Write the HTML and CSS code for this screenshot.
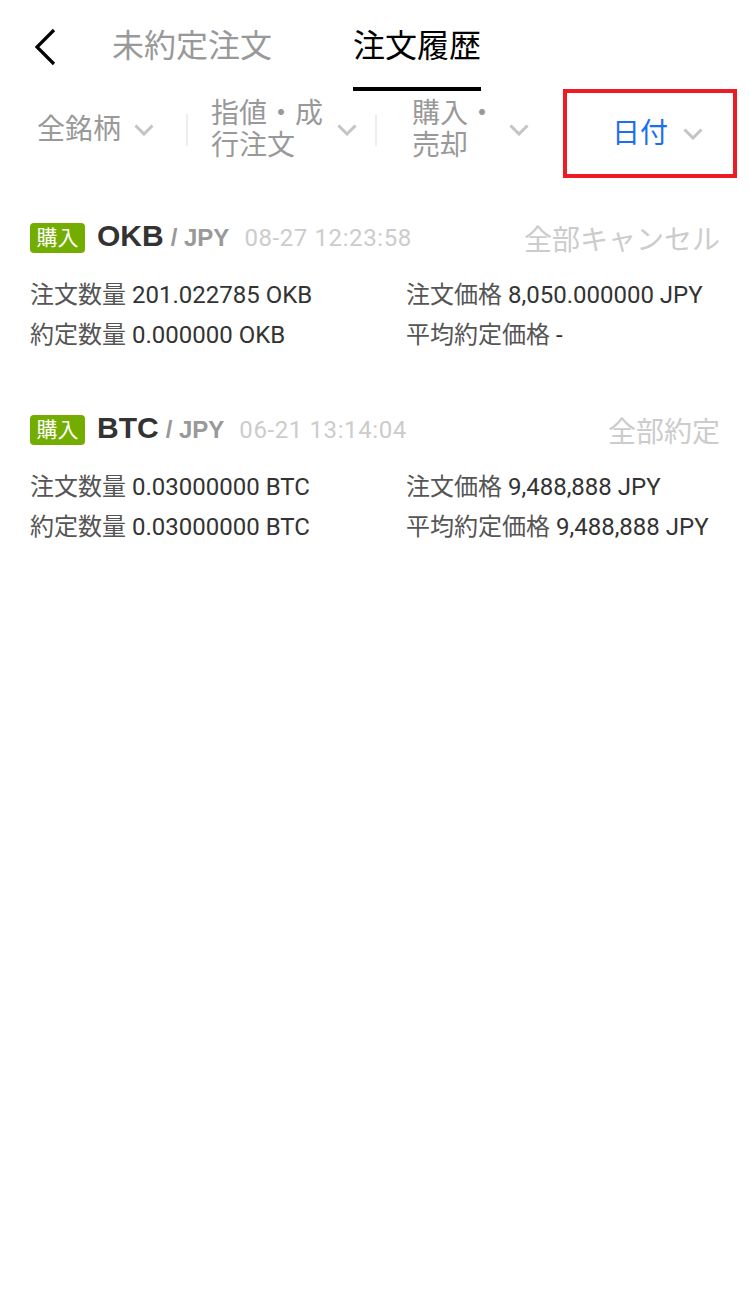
FILE: index.html
```
<!DOCTYPE html>
<html lang="ja">
<head>
    <meta charset="UTF-8">
    <meta name="viewport" content="width=device-width, initial-scale=1.0">
    <title>注文履歴</title>
    <link rel="stylesheet" href="styles.css">
</head>
<body>

    <!-- Tabs -->
    <header class="tabs">
        <a class="back" href="#">
            <svg width="30" height="40" viewBox="0 0 30 40"><path d="M24 3 L7 20 L24 37" fill="none" stroke="#000" stroke-width="3.2"/></svg>
        </a>
        <div class="tab">未約定注文</div>
        <div class="tab active">注文履歴</div>
    </header>

    <!-- Filters -->
    <nav class="filters">
        <div class="filter f1">
            <span class="label">全銘柄</span>
            <svg class="chev" width="20" height="12" viewBox="0 0 20 12"><path d="M1.5 1.5 L10 10 L18.5 1.5"/></svg>
        </div>
        <span class="sep s1"></span>
        <div class="filter f2">
            <span class="label">指値・成<br>行注文</span>
            <svg class="chev" width="20" height="12" viewBox="0 0 20 12"><path d="M1.5 1.5 L10 10 L18.5 1.5"/></svg>
        </div>
        <span class="sep s2"></span>
        <div class="filter f3">
            <span class="label">購入・<br>売却</span>
            <svg class="chev" width="20" height="12" viewBox="0 0 20 12"><path d="M1.5 1.5 L10 10 L18.5 1.5"/></svg>
        </div>
        <div class="filter f4 selected">
            <span class="label">日付</span>
            <svg class="chev" width="20" height="12" viewBox="0 0 20 12"><path d="M1.5 1.5 L10 10 L18.5 1.5"/></svg>
        </div>
    </nav>

    <!-- Orders -->
    <section class="orders">
        <article class="order">
            <div class="order-head">
                <span class="badge">購入</span>
                <span class="pair"><span class="symbol">OKB</span><span class="quote">/ JPY</span><span class="time">08-27 12:23:58</span></span>
                <span class="status">全部キャンセル</span>
            </div>
            <div class="order-body">
                <div class="field"><span class="key">注文数量</span> 201.022785 OKB</div>
                <div class="field"><span class="key">注文価格</span> 8,050.000000 JPY</div>
                <div class="field"><span class="key">約定数量</span> 0.000000 OKB</div>
                <div class="field"><span class="key">平均約定価格</span> -</div>
            </div>
        </article>

        <article class="order">
            <div class="order-head">
                <span class="badge">購入</span>
                <span class="pair"><span class="symbol">BTC</span><span class="quote">/ JPY</span><span class="time">06-21 13:14:04</span></span>
                <span class="status">全部約定</span>
            </div>
            <div class="order-body">
                <div class="field"><span class="key">注文数量</span> 0.03000000 BTC</div>
                <div class="field"><span class="key">注文価格</span> 9,488,888 JPY</div>
                <div class="field"><span class="key">約定数量</span> 0.03000000 BTC</div>
                <div class="field"><span class="key">平均約定価格</span> 9,488,888 JPY</div>
            </div>
        </article>
    </section>

</body>
</html>
```

FILE: styles.css
```
body {
    margin: 0;
    font-family: Roboto, "Noto Sans CJK JP", sans-serif;
    background: #fff;
    color: #333;
}

/* Tabs */
.tabs {
    display: flex;
    height: 91px;
    padding-left: 30px;
}

.back {
    display: block;
    width: 82px;
    padding-top: 27px;
}

.tab {
    box-sizing: border-box;
    height: 91px;
    padding-top: 24px;
    font-size: 32px;
    line-height: 44px;
    color: #999;
    border-bottom: 4px solid transparent;
}

.tab.active {
    margin-left: 81px;
    color: #000;
    border-bottom-color: #000;
}

/* Filters */
.filters {
    display: flex;
    align-items: center;
    height: 78px;
    padding-left: 37px;
}

.filter {
    display: flex;
    align-items: center;
    gap: 13px;
}

.filter .label {
    font-size: 28px;
    line-height: 32px;
    color: #999;
}

.chev path {
    fill: none;
    stroke: #c4c4c4;
    stroke-width: 3;
}

.sep {
    width: 2px;
    height: 32px;
    background: #eee;
}

.s1 { margin-left: 32px; }
.f2 { margin-left: 23px; gap: 14px; }
.s2 { margin-left: 18px; }
.f3 { margin-left: 35px; }

.f4 {
    box-sizing: border-box;
    width: 174px;
    height: 89px;
    margin-left: 34px;
    margin-top: 7px;
    padding-left: 45px;
    gap: 15px;
}

.filter.selected .label {
    color: #1a6ff0;
}

.f4.selected {
    border: 4px solid #ed1c24;
}

/* Orders */
.orders {
    padding: 54px 30px 0;
}

.order + .order {
    margin-top: 60px;
}

.order-head {
    display: flex;
    align-items: center;
    height: 30px;
}

.badge {
    box-sizing: border-box;
    width: 55px;
    height: 30px;
    border-radius: 4px;
    background: #72ad00;
    color: #fff;
    font-size: 21px;
    line-height: 30px;
    text-align: center;
}

.pair {
    margin-left: 12px;
    line-height: 30px;
    white-space: nowrap;
}

.symbol {
    font-family: "Liberation Sans", sans-serif;
    font-weight: bold;
    font-size: 30px;
    color: #333;
}

.quote {
    margin-left: 7px;
    font-family: "Liberation Sans", sans-serif;
    font-weight: bold;
    font-size: 24px;
    color: #999;
}

.time {
    margin-left: 15px;
    font-size: 24px;
    letter-spacing: 0.6px;
    color: #ccc;
}

.status {
    margin-left: auto;
    font-size: 28px;
    color: #ccc;
}

.order-body {
    display: grid;
    grid-template-columns: 376px 1fr;
    margin-top: 22px;
    font-size: 24px;
    line-height: 40px;
    color: #333;
}

.key {
    color: #555;
}
```
